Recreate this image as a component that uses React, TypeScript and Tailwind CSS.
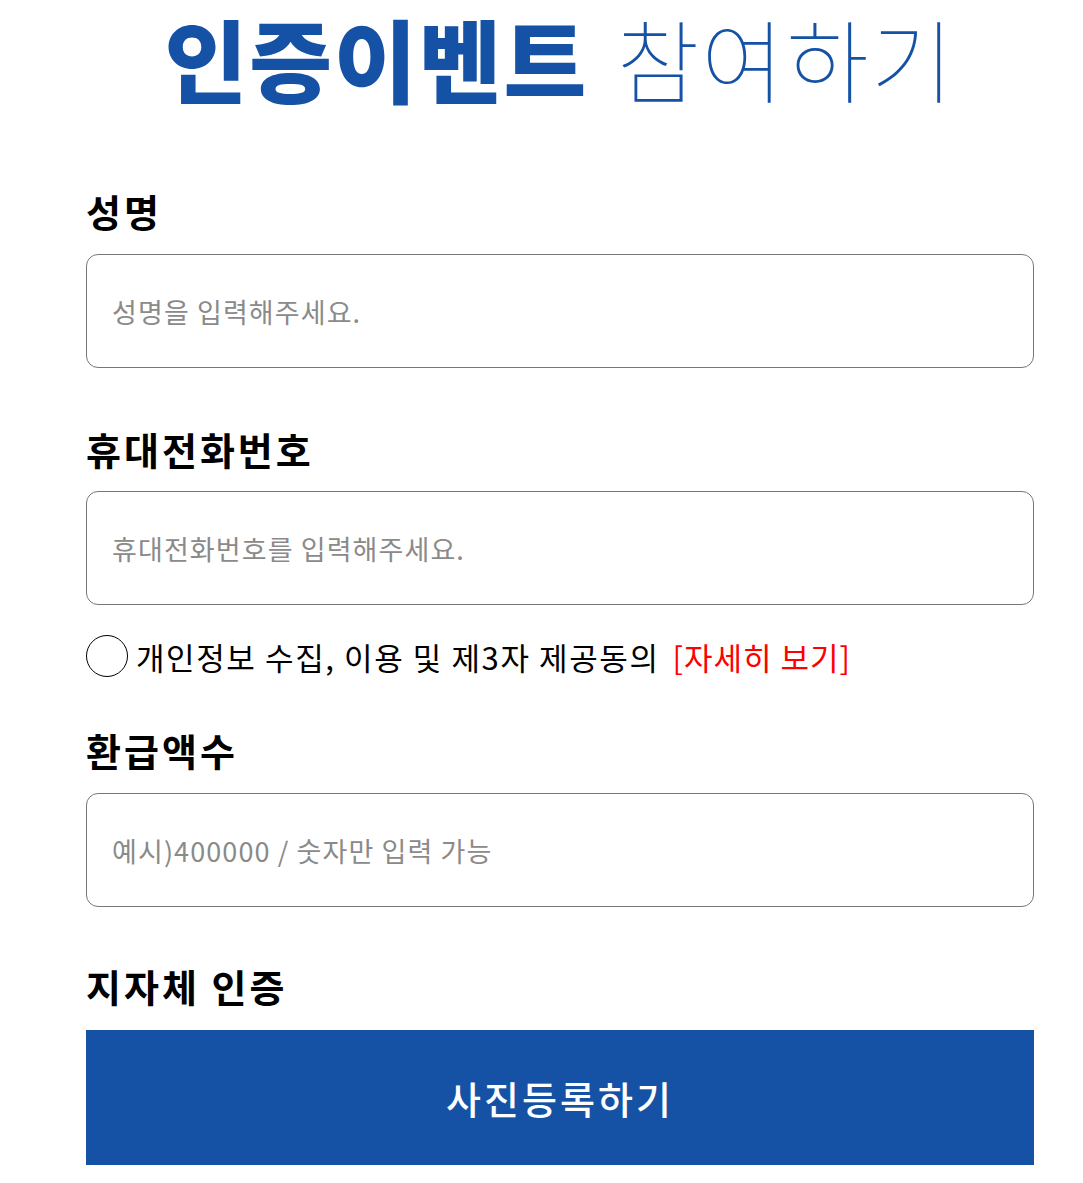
import React from "react";

const font = { fontFamily: '"Noto Sans CJK KR", "Noto Sans", sans-serif' };

function Label({ children, className = "" }: { children: React.ReactNode; className?: string }) {
  return (
    <div className={"text-[38px] font-bold leading-[46px] text-black tracking-[3px] " + className}>
      {children}
    </div>
  );
}

function Field({ placeholder, className = "" }: { placeholder: string; className?: string }) {
  return (
    <input
      type="text"
      placeholder={placeholder}
      className={
        "block w-full h-[114px] rounded-[12px] border border-[#777] bg-white px-[25px] text-[27px] tracking-[1.1px] text-black outline-none placeholder:text-[#8a8a8a] " +
        className
      }
      style={font}
    />
  );
}

export default function App() {
  return (
    <div className="w-[1083px] min-h-[1183px] bg-white" style={font}>
      <div className="ml-[86px] w-[948px]">
        <h1 className="flex items-center justify-center gap-[28px] pt-[2px] text-[90px] leading-[110px] text-[#1552a6] tracking-[2px] whitespace-nowrap">
          <span className="font-black">인증이벤트</span>
          <span className="font-thin">참여하기</span>
        </h1>

        <Label className="mt-[76px]">성명</Label>
        <Field placeholder="성명을 입력해주세요." className="mt-[20px]" />

        <Label className="mt-[58px]">휴대전화번호</Label>
        <Field placeholder="휴대전화번호를 입력해주세요." className="mt-[19px]" />

        <div className="mt-[30px] flex h-[42px] items-center whitespace-nowrap">
          <span className="h-[42px] w-[42px] shrink-0 rounded-full border border-black bg-white" />
          <span className="ml-[8px] text-[31px] leading-none text-black tracking-[1.6px]">
            개인정보 수집, 이용 및 제3자 제공동의
          </span>
          <span className="ml-[13px] text-[31px] leading-none text-[#ff0000] tracking-[1px]">[자세히 보기]</span>
        </div>

        <Label className="mt-[50px]">환급액수</Label>
        <Field placeholder="예시)400000 / 숫자만 입력 가능" className="mt-[20px]" />

        <Label className="mt-[56px]">지자체 인증</Label>
        <button
          type="button"
          className="mt-[21px] flex h-[135px] w-full items-center justify-center bg-[#1552a6] text-[38px] font-medium text-white tracking-[3px]"
          style={font}
        >
          사진등록하기
        </button>
      </div>
    </div>
  );
}
